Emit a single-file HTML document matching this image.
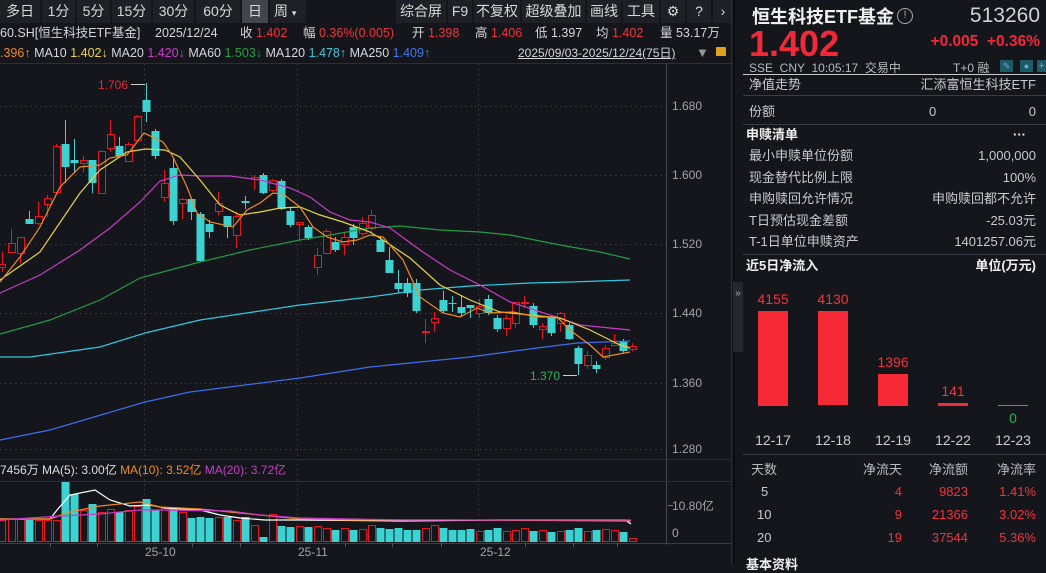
<!DOCTYPE html>
<html><head><meta charset="utf-8">
<style>
*{margin:0;padding:0;box-sizing:border-box}
body{width:1046px;height:564px;background:#14161b;overflow:hidden;position:relative;font-family:"Liberation Sans","Noto Sans CJK SC",sans-serif;color:#d4d6da}
.a{position:absolute;white-space:nowrap}
.tb{position:absolute;top:0;height:23px;background:#1e2025;font-size:14px;color:#d8d8d8;text-align:center;line-height:23px}
.r{color:#f0323c}.g{color:#1fb45a}
.rp{position:absolute;left:735px;top:0;width:311px;height:564px;background:#14161b}
.row{position:absolute;left:14px;right:10px;font-size:13px;color:#c8cacf;height:20px;line-height:20px}
.row span:last-child{position:absolute;right:0}
.ln{position:absolute;left:8px;right:0;height:1px;background:#3a3d43}
.il{position:absolute;top:25px;font-size:12.5px;line-height:16px;white-space:nowrap}
</style></head><body>
<div class="tb" style="left:0;width:40px">多日</div>
<div class="tb" style="left:42px;width:33px">1分</div>
<div class="tb" style="left:77px;width:33px">5分</div>
<div class="tb" style="left:112px;width:39px">15分</div>
<div class="tb" style="left:153px;width:41px">30分</div>
<div class="tb" style="left:196px;width:44px">60分</div>
<div class="tb" style="left:242px;width:26px;background:#42454c">日</div>
<div class="tb" style="left:270px;width:36px;text-align:left;padding-left:4px">周 <span style="font-size:9px">▾</span></div>
<div class="tb" style="left:396px;width:50px">综合屏</div>
<div class="tb" style="left:448px;width:24px">F9</div>
<div class="tb" style="left:474px;width:46px">不复权</div>
<div class="tb" style="left:522px;width:63px">超级叠加</div>
<div class="tb" style="left:587px;width:34px">画线</div>
<div class="tb" style="left:623px;width:36px">工具</div>
<div class="tb" style="left:661px;width:24px">⚙</div>
<div class="tb" style="left:687px;width:24px">?</div>
<div class="tb" style="left:713px;width:20px">›</div>
<div class="il" style="left:0">60.SH[恒生科技ETF基金]</div>
<div class="il" style="left:155px">2025/12/24</div>
<div class="il" style="left:240px">收 <span class="r">1.402</span></div>
<div class="il" style="left:303px">幅 <span class="r">0.36%(0.005)</span></div>
<div class="il" style="left:412px">开 <span class="r">1.398</span></div>
<div class="il" style="left:475px">高 <span class="r">1.406</span></div>
<div class="il" style="left:535px">低 1.397</div>
<div class="il" style="left:596px">均 <span class="r">1.402</span></div>
<div class="il" style="left:660px">量 53.17万</div>
<div class="a" style="left:0;top:45px;font-size:12.5px;line-height:16px"><span style="color:#f08c1e">.396↑</span> MA10 <span style="color:#e8d43c">1.402↓</span> MA20 <span style="color:#c83cc8">1.420↓</span> MA60 <span style="color:#20a048">1.503↓</span> MA120 <span style="color:#34c8dc">1.478↑</span> MA250 <span style="color:#3c78f0">1.409↑</span></div>
<div class="a" style="left:518px;top:45px;font-size:12px;line-height:16px;text-decoration:underline">2025/09/03-2025/12/24(75日)</div>
<div class="a" style="left:696px;top:45px;font-size:13px;color:#999">▼</div>
<div class="a" style="left:716px;top:47px;width:10px;height:9px;background:#e0a020;border-radius:1px"></div>
<div class="a" style="left:0;top:63px;width:733px;height:1px;background:#2c2f35"></div>
<svg id="ch" class="a" style="left:0;top:0" width="733" height="564"></svg>
<div class="a" style="left:733px;top:0;width:2px;height:564px;background:#0c0d10"></div>
<div class="rp">
<div class="a" style="left:17px;top:6px;font-size:18px;line-height:22px;font-weight:bold;color:#f0f0f0">恒生科技ETF基金</div>
<div class="a" style="left:162px;top:8px;width:16px;height:16px;border:1.5px solid #aaa;border-radius:50%;font-size:11px;text-align:center;line-height:13px;color:#aaa">!</div>
<div class="a" style="right:6px;top:4px;font-size:21px;color:#d0d2d6">513260</div>
<div class="a" style="left:14px;top:26px;font-size:36px;font-weight:bold;color:#f0283a;line-height:36px">1.402</div>
<div class="a" style="right:6px;top:33px;font-size:15.5px;font-weight:bold;color:#f0283a">+0.005 &nbsp;+0.36%</div>
<div class="a" style="left:14px;top:59px;font-size:12px;color:#b8bac0">SSE &nbsp;CNY &nbsp;10:05:17 &nbsp;交易中</div>
<div class="a" style="left:218px;top:59px;font-size:12px;color:#b8bac0">T+0 融</div>
<div class="a" style="left:265px;top:60px;width:13px;height:12px;background:#1e5a66;color:#6ad;font-size:9px;text-align:center;line-height:12px">✎</div>
<div class="a" style="left:285px;top:60px;width:13px;height:12px;background:#1e5a66;color:#6ad;font-size:9px;text-align:center;line-height:12px">●</div>
<div class="a" style="left:302px;top:60px;width:9px;height:12px;background:#1e5a66;color:#6ad;font-size:11px;text-align:center;line-height:12px">+</div>
<div class="ln" style="top:74px;background:#c8c8c8"></div>
<div class="row" style="top:75px"><span>净值走势</span><span>汇添富恒生科技ETF</span></div>
<div class="ln" style="top:95px"></div>
<div class="row" style="top:102px"><span>份额</span><span style="position:absolute;left:180px">0</span><span>0</span></div>
<div class="ln" style="top:124px"></div>
<div class="row" style="top:125px;left:11px;font-weight:bold;color:#f0f0f0"><span>申赎清单</span><span style="right:10px">···</span></div>
<div class="row" style="top:146px"><span>最小申赎单位份额</span><span>1,000,000</span></div>
<div class="row" style="top:168px"><span>现金替代比例上限</span><span>100%</span></div>
<div class="row" style="top:189px"><span>申购赎回允许情况</span><span>申购赎回都不允许</span></div>
<div class="row" style="top:211px"><span>T日预估现金差额</span><span>-25.03元</span></div>
<div class="row" style="top:232px"><span>T-1日单位申赎资产</span><span>1401257.06元</span></div>
<div class="ln" style="top:254px"></div>
<div class="row" style="top:256px;left:11px;font-weight:bold;color:#f0f0f0"><span>近5日净流入</span><span>单位(万元)</span></div>
<div class="a" style="left:23px;top:311px;width:30px;height:95px;background:#f52a36"></div>
<div class="a" style="left:83px;top:311px;width:30px;height:94px;background:#f52a36"></div>
<div class="a" style="left:143px;top:374px;width:30px;height:32px;background:#f52a36"></div>
<div class="a" style="left:203px;top:403px;width:30px;height:3px;background:#f52a36"></div>
<div class="a" style="left:263px;top:405px;width:30px;height:1px;background:#1fb45a"></div>
<div class="a r" style="left:18px;top:291px;width:40px;text-align:center;font-size:14px">4155</div>
<div class="a r" style="left:78px;top:291px;width:40px;text-align:center;font-size:14px">4130</div>
<div class="a r" style="left:138px;top:354px;width:40px;text-align:center;font-size:14px">1396</div>
<div class="a r" style="left:198px;top:383px;width:40px;text-align:center;font-size:14px">141</div>
<div class="a g" style="left:258px;top:410px;width:40px;text-align:center;font-size:14px">0</div>
<div class="a" style="left:13px;top:432px;width:50px;text-align:center;font-size:14px;color:#c8cacf">12-17</div>
<div class="a" style="left:73px;top:432px;width:50px;text-align:center;font-size:14px;color:#c8cacf">12-18</div>
<div class="a" style="left:133px;top:432px;width:50px;text-align:center;font-size:14px;color:#c8cacf">12-19</div>
<div class="a" style="left:193px;top:432px;width:50px;text-align:center;font-size:14px;color:#c8cacf">12-22</div>
<div class="a" style="left:253px;top:432px;width:50px;text-align:center;font-size:14px;color:#c8cacf">12-23</div>
<div class="ln" style="top:454px"></div>
<div class="a" style="left:16px;top:459px;font-size:13px;color:#b8bac0">天数</div>
<div class="a" style="right:144px;top:459px;font-size:13px;color:#b8bac0">净流天</div>
<div class="a" style="right:78px;top:459px;font-size:13px;color:#b8bac0">净流额</div>
<div class="a" style="right:10px;top:459px;font-size:13px;color:#b8bac0">净流率</div>
<div class="a" style="left:26px;top:484px;font-size:13px;color:#c8cacf">5</div>
<div class="a" style="left:22px;top:507px;font-size:13px;color:#c8cacf">10</div>
<div class="a" style="left:22px;top:530px;font-size:13px;color:#c8cacf">20</div>
<div class="a r" style="right:144px;top:484px;font-size:13px">4</div>
<div class="a r" style="right:144px;top:507px;font-size:13px">9</div>
<div class="a r" style="right:144px;top:530px;font-size:13px">19</div>
<div class="a r" style="right:78px;top:484px;font-size:13px">9823</div>
<div class="a r" style="right:78px;top:507px;font-size:13px">21366</div>
<div class="a r" style="right:78px;top:530px;font-size:13px">37544</div>
<div class="a r" style="right:10px;top:484px;font-size:13px">1.41%</div>
<div class="a r" style="right:10px;top:507px;font-size:13px">3.02%</div>
<div class="a r" style="right:10px;top:530px;font-size:13px">5.36%</div>
<div class="a" style="left:11px;top:554px;font-size:13px;font-weight:bold;color:#f0f0f0">基本资料</div>
</div>
<div class="a" style="left:733px;top:282px;width:10px;height:70px;background:#24272d;font-size:10px;color:#aaa;text-align:center;padding-top:6px">»</div>
<script>
var s='';
function L(x1,y1,x2,y2,c,d){s+='<line x1="'+x1+'" y1="'+y1+'" x2="'+x2+'" y2="'+y2+'" stroke="'+c+'" stroke-width="1"'+(d?' stroke-dasharray="1.5,3.5"':'')+'/>';}
function T(x,y,t,c,sz){s+='<text x="'+x+'" y="'+y+'" fill="'+c+'" font-size="'+(sz||12)+'" font-family="Liberation Sans,Noto Sans CJK SC,sans-serif">'+t+'</text>';}
[106,175,244,313,383,449].forEach(function(y){L(0,y+.5,666,y+.5,'#3a3d44',1);});
[144,297,478].forEach(function(x){L(x+.5,64,x+.5,540,'#3a3d44',1);});
L(666.5,64,666.5,545,'#45484f');L(731.5,0,731.5,564,'#2c2f35');
[['1.680',106],['1.600',175],['1.520',244],['1.440',313],['1.360',383],['1.280',449]].forEach(function(a){T(672,a[1]+4,a[0],'#a0a3aa');});
L(0,459.5,731,459.5,'#2c2f35');L(0,481.5,731,481.5,'#2c2f35');L(0,543.5,731,543.5,'#3a3d44');
L(668,505.5,673,505.5,'#777');T(672,510,'10.80亿','#a0a3aa');T(672,537,'0','#a0a3aa');
T(145,556,'25-10','#a0a3aa');T(298,556,'25-11','#a0a3aa');T(480,556,'25-12','#a0a3aa');
[50,97,192,240,345,392,441,525,573,617].forEach(function(x){L(x+.5,543,x+.5,547,'#555');});
s+='<text x="0" y="474" font-size="12" font-family="Liberation Sans,Noto Sans CJK SC,sans-serif"><tspan fill="#ddd">7456万 MA(5): 3.00亿 </tspan><tspan fill="#f08c1e">MA(10): 3.52亿 </tspan><tspan fill="#c83cc8">MA(20): 3.72亿</tspan></text>';
var C=[[267,264,252,272,1],[252,243,229,253,1],[253,237,237,263,1],[219,224,211,224,0],[223,216,202,225,1],[204,198,195,217,1],[192,146,144,193,1],[144,167,120,183,0],[160,163,139,172,0],[163,160,156,172,1],[160,183,160,193,0],[193,151,150,193,1],[148,134,120,152,1],[146,156,137,156,0],[161,144,142,161,1],[140,116,115,141,1],[100,112,83,122,0],[131,156,129,159,0],[197,183,170,202,1],[168,221,158,225,0],[203,199,198,219,1],[199,212,198,220,0],[214,261,212,262,0],[224,232,220,238,0],[211,203,192,215,1],[216,227,216,238,0],[235,216,212,248,1],[201,203,196,209,0],[179,177,175,190,1],[175,193,173,194,0],[190,180,179,192,1],[181,209,179,210,0],[211,225,207,227,0],[224,222,222,240,1],[227,238,225,240,0],[267,255,248,275,1],[253,231,229,254,1],[242,250,237,252,0],[244,237,233,255,1],[227,238,224,245,0],[233,223,217,236,1],[228,215,210,233,1],[240,252,237,252,0],[260,273,247,273,0],[283,289,270,293,0],[283,293,278,297,0],[283,311,279,313,0],[332,331,319,343,1],[322,318,312,332,1],[300,311,291,313,0],[303,304,296,312,0],[307,313,295,317,0],[308,305,305,318,0],[313,306,299,318,1],[299,313,295,315,0],[318,329,315,332,0],[328,318,315,336,1],[323,302,302,328,1],[303,302,296,308,1],[306,325,303,328,0],[329,326,323,339,1],[317,333,315,336,0],[323,313,312,332,1],[325,339,323,340,0],[348,364,346,375,0],[365,355,351,369,1],[365,369,361,373,0],[357,348,345,360,1],[345,343,334,345,1],[342,351,339,353,0],[349,346,343,351,1]];
var V=[22,23,23,22,22,22,22,60,48,32,38,30,33,30,32,36,43,32,34,34,30,24,25,24,25,25,22,25,17,5,28,16,15,16,15,16,14,12,14,12,13,17,14,13,14,12,12,14,17,14,12,12,13,11,12,14,11,12,14,11,12,10,11,12,14,11,12,13,12,10,4];
var RC='#e8141e',CC='#3cd2d2';
C.forEach(function(c,i){var x=2+9*i;var col=c[4]?RC:CC;
 L(x+.5,c[2],x+.5,c[3],col);
 var t=Math.min(c[0],c[1]),h=Math.max(1,Math.abs(c[0]-c[1]));
 if(c[4]) s+='<rect x="'+(x-3)+'.5" y="'+(t+.5)+'" width="7" height="'+h+'" fill="#14161b" stroke="'+col+'"/>';
 else s+='<rect x="'+(x-3.5)+'" y="'+t+'" width="8" height="'+h+'" fill="'+col+'"/>';
 var vh=V[i]||10, vy=542-vh;
 if(c[4]) s+='<rect x="'+(x-3)+'.5" y="'+(vy+.5)+'" width="7" height="'+(vh-1)+'" fill="none" stroke="'+col+'"/>';
 else s+='<rect x="'+(x-3.5)+'" y="'+vy+'" width="8" height="'+vh+'" fill="'+col+'"/>';
});
function P(pts,c){s+='<polyline fill="none" stroke="'+c+'" stroke-width="1.2" points="'+pts.map(function(p){return p.join(',')}).join(' ')+'"/>';}
P([[0,440],[50,430],[145,402],[190,392],[300,378],[370,367],[470,357],[537,348],[577,343],[630,341]],'#3c6ef0');
P([[0,357],[30,357],[100,347],[145,333],[200,320],[300,305],[370,297],[420,290],[470,286],[530,283],[570,282],[630,280]],'#30c8e0');
P([[0,334],[50,320],[100,300],[140,278],[200,262],[250,250],[300,240],[330,235],[370,228],[400,226],[440,230],[480,232],[510,235],[560,245],[600,252],[630,259]],'#1e9c46');
P([[0,293],[40,275],[80,250],[110,228],[140,202],[160,181],[180,175],[200,176],[230,176],[260,180],[290,188],[310,197],[330,212],[350,220],[370,222],[390,228],[420,250],[450,270],[480,285],[510,302],[550,315],[580,325],[630,330]],'#c83cc8');
P([[0,280],[40,252],[80,193],[100,170],[127,152],[145,149],[165,150],[180,157],[200,180],[220,205],[240,215],[260,212],[280,208],[300,207],[320,215],[343,222],[370,232],[380,238],[410,258],[440,285],[470,300],[500,312],[530,315],[560,318],[590,330],[620,345],[630,348]],'#e8d43c');
P([[0,282],[20,257],[40,227],[60,187],[80,167],[100,165],[110,158],[127,155],[144,133],[163,142],[172,155],[187,187],[197,213],[210,222],[233,227],[247,210],[260,203],[273,193],[283,194],[300,207],[313,227],[327,237],[343,242],[357,240],[370,235],[383,237],[403,260],[420,297],[443,313],[460,317],[477,308],[490,313],[513,312],[537,317],[557,317],[570,330],[590,345],[603,357],[630,352]],'#f08c1e');
P([[0,519],[50,519],[57,510],[70,495],[95,490],[110,500],[130,506],[150,505],[165,508],[200,510],[220,515],[240,518],[265,520],[300,520],[400,521],[500,520],[625,520],[631,524]],'#ffffff');
P([[0,519],[50,519],[70,512],[100,506],[140,502],[160,507],[200,509],[260,515],[300,519],[350,520],[450,520],[631,521]],'#f08c1e');
P([[0,520],[60,516],[100,514],[140,510],[160,510],[230,511],[260,515],[300,518],[400,520],[631,520]],'#c83cc8');
T(98,89,'1.706','#e8283a');L(131,84.5,145,84.5,'#ccc');
T(530,380,'1.370','#1fb45a');L(563,375.5,577,375.5,'#ccc');
document.getElementById('ch').innerHTML=s;
</script>
</body></html>
